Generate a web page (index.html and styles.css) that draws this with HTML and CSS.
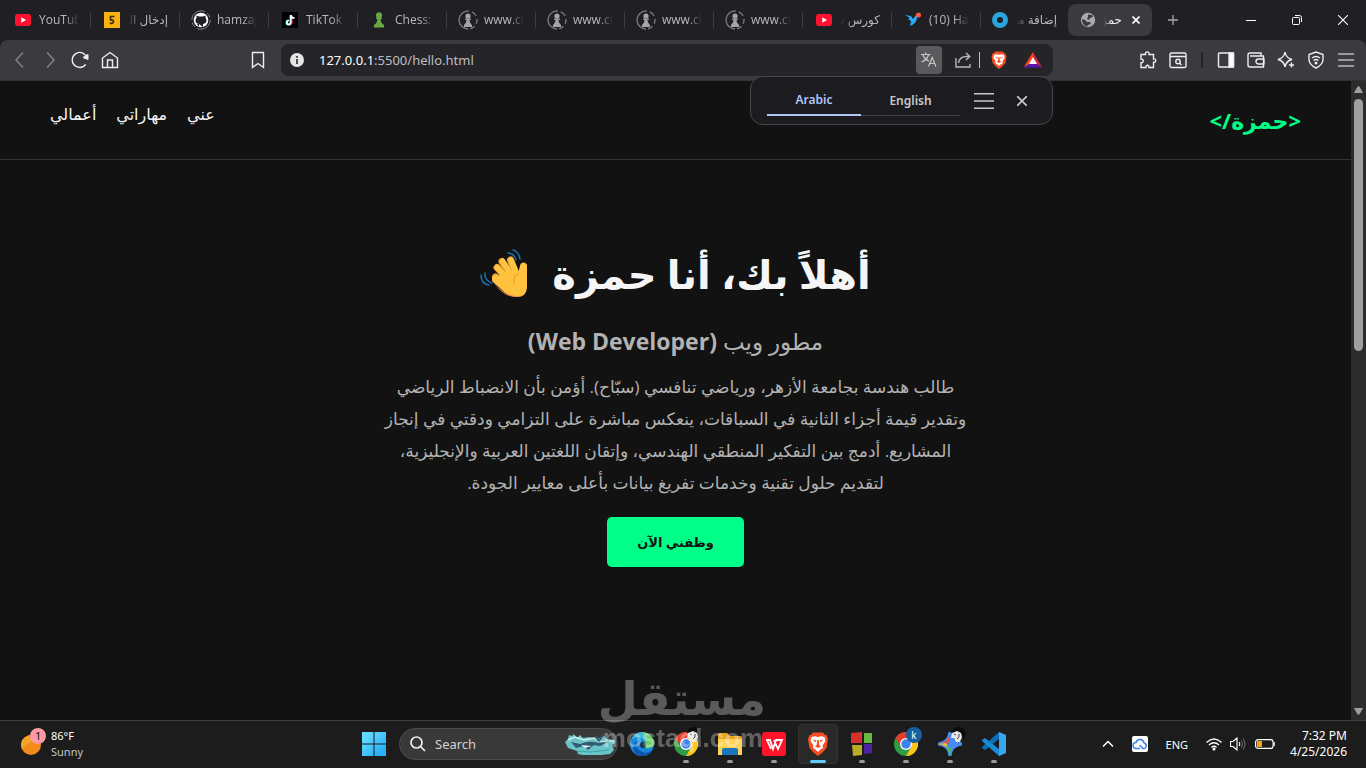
FILE: index.html
```html
<!DOCTYPE html>
<html lang="ar">
<head>
    <meta charset="UTF-8">
    <meta name="viewport" content="width=device-width, initial-scale=1.0">
    <title>حمزة</title>
    <link rel="stylesheet" href="styles.css">
</head>
<body>
    <!-- Shared icons -->
    <svg class="defs" aria-hidden="true">
        <symbol id="youtube" viewBox="0 0 16 16"><rect y="2" width="16" height="12" rx="3" fill="#ff1230"/><path d="M6.3 5.3L11 8l-4.700 2.700z" fill="#fff"/></symbol>
        <symbol id="pawn" viewBox="0 0 20 20"><circle cx="10" cy="10" r="9" fill="none" stroke="#77777a" stroke-width="1.400" stroke-dasharray="29 3 6 3 5 3 5 3" transform="rotate(90 10 10)"/><circle cx="10" cy="6" r="2.600" fill="#a5a5a5"/><path d="M7 8.500h6v1.200h-1.500c0 2 .5 3 2.500 5.300V17H6v-2c2-2.300 2.500-3.300 2.500-5.300H7z" fill="#a5a5a5"/></symbol>
        <symbol id="brave" viewBox="0 0 20 24"><path d="M5 .5h10l2 2.500h1.500L20 7l-1.500 9L14 21l-4 3-4-3-4.500-5L0 7l1.500-4H3z" fill="#fb4b22"/><path d="M3.500 5l3.500-.8 3 .8 3-.8 3.500.8L17.500 9l-3 4.500.7 2.500-2.700 1.500L10 20l-2.500-2.500L4.800 16l.7-2.500L2.500 9z" fill="#fff"/><path d="M4.500 7.500l4 1-1 1.700zM15.500 7.500l-4 1 1 1.700zM9.300 8h1.400l.6 5 1.700 1.300L10 16l-3-1.700L8.700 13z" fill="#fb4b22"/></symbol>
        <symbol id="chrome" viewBox="0 0 24 24"><circle cx="12" cy="12" r="12" fill="#2c9c45"/><path d="M1.600 6A12 12 0 0 1 22.400 6H12L7 15z" fill="#e93a2e"/><path d="M22.400 6A12 12 0 0 1 12 24l5.200-9L14 6z" fill="#fcc419"/><circle cx="12" cy="12" r="6" fill="#fff"/><circle cx="12" cy="12" r="4.700" fill="#3b82ee"/></symbol>
        <symbol id="portrait" viewBox="0 0 16 16"><path d="M1 6Q2 0 8 0t8 6l-2 6-3-4z" fill="#0c0c0c"/><path d="M2 6l5-2 4 2 1 4-2 5-4 0-2-4-3 0z" fill="#e8e8e8"/><path d="M4 7l2 1M9 7v3l-2 2" stroke="#444" fill="none"/></symbol>
    </svg>

    <!-- Tab strip -->
    <div class="tabs">
        <div class="tab"><svg class="fav"><use href="#youtube"/></svg><span class="tab-title">YouTube</span></div>
        <div class="tab"><svg class="fav" viewBox="0 0 16 16"><rect width="16" height="16" fill="#fdb011"/><path d="M10.500 4.500H6.500V8c4-1 4.500 4-.8 3.300" fill="none" stroke="#3a2c10" stroke-width="1.600"/></svg><span class="tab-title rtl">إدخال البيانات</span></div>
        <div class="tab"><svg class="fav big" viewBox="0 0 20 20"><circle cx="10" cy="10" r="9.200" fill="none" stroke="#89898c" stroke-dasharray="18 3 5 3"/><circle cx="10" cy="10" r="7.300" fill="#fff"/><path d="M8 17v-3c-2 .4-2.500-1-3-1.500M8 14c-5-1-3.500-5-2.500-6V5.500l2.500 1h4l2.500-1V8c1 1 2.500 5-2.500 6v3z" fill="#202024"/></svg><span class="tab-title">hamzagamal</span></div>
        <div class="tab"><svg class="fav" viewBox="0 0 16 16"><rect width="16" height="16" fill="#000"/><path d="M8.500 3v7.500a2 2 0 1 1-2-2" stroke="#25f4ee" stroke-width="2" fill="none"/><path d="M9 3v7.500a2 2 0 1 1-2-2M9 3.500q.5 2.500 3.500 2.700" stroke="#fff" stroke-width="1.700" fill="none"/><path d="M10.200 7v4q-.5 1.800-2 2" stroke="#fe2c55" stroke-width=".8" fill="none"/></svg><span class="tab-title">TikTok Studio</span></div>
        <div class="tab"><svg class="fav" viewBox="0 0 16 16"><circle cx="8" cy="3.300" r="3" fill="#6aa844"/><path d="M5 5.500h6V7H9.700c0 3 .8 4 3.300 6v2.500H3V13c2.500-2 3.300-3 3.300-6H5z" fill="#6aa844"/></svg><span class="tab-title">Chess: join</span></div>
        <div class="tab"><svg class="fav big"><use href="#pawn"/></svg><span class="tab-title">www.chess.com</span></div>
        <div class="tab"><svg class="fav big"><use href="#pawn"/></svg><span class="tab-title">www.chess.com</span></div>
        <div class="tab"><svg class="fav big"><use href="#pawn"/></svg><span class="tab-title">www.chess.com</span></div>
        <div class="tab"><svg class="fav big"><use href="#pawn"/></svg><span class="tab-title">www.chess.com</span></div>
        <div class="tab"><svg class="fav"><use href="#youtube"/></svg><span class="tab-title rtl">كورس شامل</span></div>
        <div class="tab"><svg class="fav" viewBox="0 0 16 16"><path d="M0 3l6 1 2 3 3-4h3l-2 3q-1 6-7 8l1-5-3-2 2-1z" fill="#29aaf5"/><circle cx="13.500" cy="3" r="2.500" fill="#ff573d"/></svg><span class="tab-title">(10) Hamza</span></div>
        <div class="tab last"><svg class="fav" viewBox="0 0 16 16"><circle cx="8" cy="8" r="5.500" fill="none" stroke="#2aa5df" stroke-width="5"/></svg><span class="tab-title rtl">إضافة مشروع</span></div>
        <div class="tab active">
            <svg class="fav" viewBox="0 0 16 16"><circle cx="8" cy="8" r="7.200" fill="#a9aaac"/><path d="M8 2.500l4 .5 1 2-3 1-1 2-2-1 1-2zM2 7l3 1 2 2 3 0 1 2-3 1-1 1.500Q2 13 2 7z" fill="#3b3a3e"/></svg>
            <span class="tab-title rtl">حمزة | مطور</span>
            <button class="plain close" aria-label="Close tab"><svg width="8" height="8" viewBox="0 0 8 8"><path d="M.5.5l7 7M7.500.5l-7 7" stroke="#fff" stroke-width="1.700"/></svg></button>
        </div>
        <button class="plain new-tab" aria-label="New tab"><svg width="10" height="10" viewBox="0 0 10 10"><path d="M5 0v10M0 5h10" stroke="#aaa" stroke-width="1.300"/></svg></button>
        <div class="window-buttons">
            <button class="plain" aria-label="Minimize"><svg width="10" height="10" viewBox="0 0 10 10"><path d="M0 5.500h10" stroke="#fff"/></svg></button>
            <button class="plain" aria-label="Restore"><svg width="10" height="10" viewBox="0 0 10 10"><g fill="none" stroke="#fff"><rect x=".5" y="2.500" width="7" height="7" rx="1"/><path d="M3 .5h4.500a2 2 0 0 1 2 2V7"/></g></svg></button>
            <button class="plain" aria-label="Close"><svg width="10" height="10" viewBox="0 0 10 10"><path d="M0 0l10 10M10 0L0 10" stroke="#fff" stroke-width="1.100"/></svg></button>
        </div>
    </div>

    <!-- Toolbar -->
    <div class="toolbar">
        <button class="plain tool dim" aria-label="Back"><svg class="icon" viewBox="0 0 18 18"><path d="M12 1.500L5 9l7 7.500"/></svg></button>
        <button class="plain tool dim" aria-label="Forward"><svg class="icon" viewBox="0 0 18 18"><path d="M6 1.500L13 9l-7 7.500"/></svg></button>
        <button class="plain tool" aria-label="Reload"><svg class="icon" viewBox="0 0 18 18"><path d="M14.700 13.500A7.500 7.500 0 1 1 16 7"/><path d="M12 6.500l5-3v5z" fill="#eee" stroke-width="1"/></svg></button>
        <button class="plain tool" aria-label="Home"><svg class="icon" viewBox="0 0 18 18"><path d="M1.500 16.500V7L9 1.500 16.500 7v9.500zM6.500 16V9h5v7"/></svg></button>
        <button class="plain tool bookmark" aria-label="Bookmark"><svg class="icon" viewBox="0 0 18 18"><path d="M3.500 1.500h11v15L9 12.500l-5.500 4z"/></svg></button>
        <div class="url-bar">
            <svg class="info" viewBox="0 0 14 14"><circle cx="7" cy="7" r="7" fill="#e6e6e7"/><path d="M7 6v5M7 3v1.700" stroke="#29282d" stroke-width="1.600"/></svg>
            <div class="url" dir="ltr">127.0.0.1<span>:5500/hello.html</span></div>
            <button class="plain translate-button" aria-label="Translate"><svg width="16" height="16" viewBox="0 0 16 16" fill="none" stroke="#c8c8c9" stroke-width="1.200"><path d="M0 2.500h9.500M4.700.5v2M2 3q1.500 4.500 6 6M7.500 3Q6 8 .5 10M7.500 14.500l3.700-9 3.700 9M8.700 11.500h5"/></svg></button>
            <button class="plain share" aria-label="Share"><svg width="16" height="16" viewBox="0 0 16 16" fill="none" stroke="#b8b8ba" stroke-width="1.400"><path d="M1 6v9h14v-3M3.500 11q1-6.500 8-6.500h3M11 1l3.800 3.500L11 8"/></svg></button>
            <span class="bar-line"></span>
            <button class="plain shield" aria-label="Brave Shields"><svg width="16" height="18"><use href="#brave"/></svg></button>
            <button class="plain rewards" aria-label="Rewards"><svg width="18" height="16" viewBox="0 0 18 16"><path d="M9 0L0 15l6-3 3-5z" fill="#ff4724"/><path d="M9 0l9 15-6-3-3-5z" fill="#c9263f"/><path d="M0 15.500l6-4h6l6 4z" fill="#5b16ab"/><path d="M9 5l4 7H5z" fill="#fff"/></svg></button>
        </div>
        <div class="extensions">
            <button class="plain tool" aria-label="Extensions"><svg class="icon" viewBox="0 0 18 18"><path d="M2 3.500h4.500c-1-3.500 4.500-3.500 3.500 0h4.500V8c3-.8 3 4 0 3.300v5.200H10c.8-3-3.500-3-3 0H2v-4.800c3 .6 3-4 0-3.500z"/></svg></button>
            <button class="plain tool" aria-label="Search tabs"><svg class="icon" viewBox="0 0 18 18"><rect x="1" y="2" width="16" height="14.500" rx="1.500"/><path d="M1 5.500h16M10.500 12l2 2"/><circle cx="9" cy="10.500" r="2.200"/></svg></button>
            <span class="tool-line"></span>
            <button class="plain tool" aria-label="Sidebar"><svg class="icon" viewBox="0 0 18 18"><rect x="1.500" y="2" width="15" height="14" rx="1"/><path d="M12 2h4.500v14H12z" fill="#fff"/></svg></button>
            <button class="plain tool" aria-label="Wallet"><svg class="icon" viewBox="0 0 18 18"><path d="M14 5V2H3a2 2 0 0 0-2 2v10a2 2 0 0 0 2 2h13.500V5H3M17 8h-5.500a2.500 2.500 0 0 0 0 5H17z"/></svg></button>
            <button class="plain tool" aria-label="Leo"><svg class="icon" viewBox="0 0 18 18"><path d="M8 1q1 6 7 7.500Q9 10 8 16q-1-6-7-7.500Q7 7 8 1zM14.500 11.500v5M12 14h5"/></svg></button>
            <button class="plain tool" aria-label="VPN"><svg class="icon" viewBox="0 0 18 18"><path d="M9 1l7 2.500v5q0 5-7 8.500-7-3.500-7-8.500v-5zM5 7q4-3 8 0M6.500 9.500q2.500-2 5 0"/><circle cx="9" cy="12" r=".8"/></svg></button>
            <button class="plain tool" aria-label="Menu"><svg class="icon" viewBox="0 0 18 18"><path d="M1 3h16M1 9h16M1 15h16" stroke="#bbb"/></svg></button>
        </div>

        <div class="translate-popup">
            <button class="plain lang selected">Arabic</button>
            <button class="plain lang">English</button>
            <button class="plain options" aria-label="Options"><svg width="20" height="16" viewBox="0 0 20 16"><path d="M0 .8h20M0 8h20M0 15.200h20" stroke="#c9c9ca" stroke-width="1.600"/></svg></button>
            <button class="plain dismiss" aria-label="Dismiss"><svg width="10" height="10" viewBox="0 0 10 10"><path d="M0 0l10 10M10 0L0 10" stroke="#ccc" stroke-width="1.600"/></svg></button>
        </div>
    </div>

    <!-- Page -->
    <div class="viewport">
        <div class="page" dir="rtl">
            <header class="site-header">
                <div class="logo">&lt;حمزة/&gt;</div>
                <nav class="site-nav">
                    <a href="#about">عني</a>
                    <a href="#skills">مهاراتي</a>
                    <a href="#work">أعمالي</a>
                </nav>
            </header>
            <main class="hero">
                <h1>أهلاً بك، أنا حمزة
                    <svg class="wave" viewBox="0 0 50 50" role="img" aria-label="wave">
                        <g fill="none" stroke-linecap="round">
                            <path d="M30 38L15.500 28" stroke="#f2a634" stroke-width="7"/>
                            <path d="M31 34L17 18.500" stroke="#f2a634" stroke-width="7"/>
                            <path d="M31 34L17.500 18.500" stroke="#ffc540" stroke-width="5.500"/>
                            <path d="M34 30L22 12.500" stroke="#f2a634" stroke-width="7"/>
                            <path d="M34 30L22.700 12.500" stroke="#ffc540" stroke-width="5.500"/>
                            <path d="M38 29L30.500 11" stroke="#f2a634" stroke-width="7"/>
                            <path d="M38 29L31 11" stroke="#ffc540" stroke-width="5.500"/>
                            <path d="M41 34Q41 25 43.500 17" stroke="#ffc540" stroke-width="7"/>
                        </g>
                        <path d="M12 29q2-4 6-2l8-3 9-4 5 4 7-7v22q-1 9-10 9-8 0-15-7L12 32z" fill="#ffc340"/>
                        <path d="M12 31q7 10 14 13 9 5 17 2-8 4-17-.5Q18 41 12 31z" fill="#f0844c"/>
                        <path d="M39 24q-7 3-5 11" fill="none" stroke="#eba32f" stroke-width="1.200"/>
                        <g fill="none" stroke="#1672b0" stroke-width="1.500" stroke-linecap="round"><path d="M28 4q7 1 8 7M33 1q6 2 7 9M5 24q-1 7 7 10M1 26q0 9 8 10"/></g>
                    </svg>
                </h1>
                <h2>مطور ويب <b>(Web Developer)</b></h2>
                <p>طالب هندسة بجامعة الأزهر، ورياضي تنافسي (سبّاح). أؤمن بأن الانضباط الرياضي<br>
                وتقدير قيمة أجزاء الثانية في السباقات، ينعكس مباشرة على التزامي ودقتي في إنجاز<br>
                المشاريع. أدمج بين التفكير المنطقي الهندسي، وإتقان اللغتين العربية والإنجليزية،<br>
                لتقديم حلول تقنية وخدمات تفريغ بيانات بأعلى معايير الجودة.</p>
                <a class="btn" href="#contact">وظفني الآن</a>
            </main>
        </div>
        <div class="scrollbar">
            <svg width="9" height="8" viewBox="0 0 9 8"><path d="M4.500 0q1 0 4.500 7H0q3.500-7 4.500-7z" fill="#9f9f9f"/></svg>
            <div class="thumb"></div>
            <svg class="down" width="9" height="8" viewBox="0 0 9 8"><path d="M4.500 8Q3.500 8 0 1h9q-3.500 7-4.500 7z" fill="#9f9f9f"/></svg>
        </div>
    </div>

    <!-- Taskbar -->
    <div class="taskbar">
        <div class="weather">
            <svg width="26" height="28" viewBox="0 0 26 28"><circle cx="10" cy="17" r="10" fill="#f28a1c"/><path d="M0 17A10 10 0 0 1 17 10Q5 16 1 21z" fill="#f3a52b"/><circle cx="17" cy="8" r="8" fill="#ff99a4"/><text class="badge" x="14" y="12">1</text></svg>
            <div class="weather-text">86°F<span>Sunny</span></div>
        </div>
        <div class="apps">
            <button class="plain app" aria-label="Start"><svg width="24" height="24" viewBox="0 0 24 24"><defs><linearGradient id="win" x1="0" y1="0" x2="1" y2="1"><stop offset=".2" stop-color="#60d8ff"/><stop offset=".8" stop-color="#2bb0f8"/></linearGradient></defs><path d="M0 0h11.500v11.500H0zM12.500 0H24v11.500H12.500zM0 12.500h11.500V24H0zM12.500 12.500H24V24H12.500z" fill="url(#win)"/></svg></button>
            <label class="search">
                <svg width="16" height="16" viewBox="0 0 16 16" fill="none" stroke="#eee" stroke-width="1.700"><circle cx="6.500" cy="6.500" r="5.500"/><path d="M10.500 10.500l4.500 4.500"/></svg>
                <input type="text" placeholder="Search" aria-label="Search">
                <svg width="50" height="22" viewBox="0 0 50 22"><path d="M0 9l3-3 1-4 3 1 2-2 3 4 3-3 3 3 6-1 8 2 7-3 3 3 8 1v3l-3 2 2 5-4 4-9 1-14 1-9-2-1-3-9-3z" fill="#69c3c7"/><path d="M3 7l7-3 9 3 10-2 8 4 11-1" fill="none" stroke="#d2eee9" stroke-width="1.500"/><path d="M6 9l9 2q10-4 18-1l12-2-10 5-6-1-6 5-4-4-8 2z" fill="#315b72"/><path d="M16 12l11 1-7 2z" fill="#d9eff0"/><path d="M34 8l-4-5M34 8l4-6" fill="none" stroke="#315b72" stroke-width="2"/><path d="M12 18l14 1 18-2" fill="none" stroke="#3aa6a8"/></svg>
            </label>
            <button class="plain app" aria-label="Edge"><svg width="24" height="24" viewBox="0 0 24 24"><circle cx="12" cy="12" r="12" fill="#1688dc"/><path d="M1 8Q5 0 12 0q11 1 12 11-1 6-8 5-3-1-1-4-1-7-8-7-4 1-6 3z" fill="#42b8d7"/><path d="M12 0q11 1 12 11-1 6-8 5-3-1-1-4 3-5-3-12z" fill="#68cf69"/><path d="M9 9q-7 8 6 12 4 0 7-3-4 7-12 6-9-4-6-11 1-4 5-4z" fill="#0b57ad"/><circle cx="13" cy="13" r="3" fill="#1b3447"/></svg></button>
            <button class="plain app open" aria-label="Chrome"><svg width="24" height="24"><use href="#chrome"/></svg><svg class="mini"><use href="#portrait"/></svg></button>
            <button class="plain app open" aria-label="Files"><svg width="24" height="22" viewBox="0 0 24 22"><path d="M0 2q0-2 2-2h7l3 3h10q2 0 2 2v17H0z" fill="#e9a51c"/><path d="M0 6h24v16H0z" fill="#ffd257"/><path d="M4 22v-5q0-2 2-2h12q2 0 2 2v5z" fill="#1976bd"/></svg></button>
            <button class="plain app open" aria-label="WPS"><svg width="24" height="24" viewBox="0 0 24 24"><rect width="24" height="24" rx="3" fill="#ff142b"/><path d="M4 8h4l3 9 3-9h6l-4 9-4-9M5 8l4 9" fill="none" stroke="#fff" stroke-width="1.800"/></svg></button>
            <button class="plain app open current" aria-label="Brave"><svg width="20" height="24"><use href="#brave"/></svg></button>
            <button class="plain app open" aria-label="Blocks"><svg width="22" height="24" viewBox="0 0 22 24"><path d="M0 1l11-1v11H0z" fill="#d8302c"/><path d="M13 1h8v10h-8z" fill="#67b841"/><path d="M1 13h10v10l-9 1z" fill="#b8ad26"/><path d="M13 12h8v9l-8 1z" fill="#4c24a0"/></svg></button>
            <button class="plain app open" aria-label="Chrome profile"><svg width="24" height="24"><use href="#chrome"/></svg><span class="mini letter">k</span></button>
            <button class="plain app open" aria-label="Gemini"><svg width="24" height="24" viewBox="0 0 24 24"><path d="M12 0q1 11 12 12Q13 13 12 24 11 13 0 12 11 11 12 0z" fill="#468cf2" stroke="#468cf2" stroke-width="3" stroke-linejoin="round"/><path d="M0 12q11-1 12-12v9l-4 5z" fill="#ee5047"/><path d="M0 12l8-1 3 5v3Q9 13 0 12z" fill="#f6c52c"/><path d="M8 13l4 11 2-7z" fill="#44b670"/></svg><svg class="mini"><use href="#portrait"/></svg></button>
            <button class="plain app open" aria-label="VS Code"><svg width="24" height="24" viewBox="0 0 24 24"><path d="M17 0v7L3 18l-3-2v-1z" fill="#0b6cb7"/><path d="M17 24v-7L3 6 0 8v1z" fill="#178bd8"/><path d="M17 0l7 3v18l-7 3z" fill="#35a7f1"/></svg></button>
        </div>
        <div class="tray" dir="ltr">
            <svg width="12" height="8" viewBox="0 0 12 8"><path d="M1 6.500l5-5 5 5" fill="none" stroke="#fff" stroke-width="1.500"/></svg>
            <svg class="cloud" width="16" height="16" viewBox="0 0 16 16"><rect width="16" height="16" rx="2" fill="#fff"/><path d="M8 12.500H4a3 3 0 0 1 0-6Q5 3 8.500 3.500 11.500 4 12 7q3 1 2 4-1 2-3 1.500L7.500 9" fill="none" stroke="#3983ef" stroke-width="1.500"/></svg>
            <span class="input-lang">ENG</span>
            <svg width="16" height="14" viewBox="0 0 16 14"><g fill="none" stroke="#fff" stroke-width="1.300"><path d="M.5 5.500q7.500-7 15 0M3 8q5-4.500 10 0M5.500 10.500q2.500-2.500 5 0"/></g><circle cx="8" cy="12" r="1.500" fill="#fff"/></svg>
            <svg class="sound" width="16" height="14" viewBox="0 0 16 14" fill="none" stroke="#fff" stroke-width="1.100"><path d="M.5 4.500H3L7 1v12L3 9.500H.5zM9 5q1.500 2 0 4"/><path d="M11 3.500q3 3.500 0 7M13 1.500q4 5.500 0 11" stroke="#666"/></svg>
            <svg class="battery" width="20" height="10" viewBox="0 0 20 10"><rect x=".6" y=".6" width="17.500" height="8.800" rx="2.500" fill="none" stroke="#fff" stroke-width="1.200"/><rect x="2" y="2" width="5" height="6" fill="#f6a31b"/><path d="M19.300 3v4" stroke="#fff"/></svg>
            <div class="clock">7:32 PM<span>4/25/2026</span></div>
        </div>
    </div>

    <div class="watermark" aria-hidden="true">
        <div class="watermark-name" dir="rtl">مستقل</div>
        <div class="watermark-site">mostaql.com</div>
    </div>
</body>
</html>
```
FILE: styles.css
```css
* {
    box-sizing: border-box;
}
body {
    margin: 0;
    height: 100vh;
    display: flex;
    flex-direction: column;
    overflow: hidden;
    background-color: #202024;
    color: #fff;
    font-family: "Noto Sans", "DejaVu Sans", sans-serif;
    font-size: 12px;
}
svg {
    flex: none;
}
.defs {
    position: absolute;
    width: 0;
    height: 0;
}
.plain {
    display: flex;
    align-items: center;
    justify-content: center;
    flex: none;
    padding: 0;
    border: 0;
    background: none;
    color: inherit;
    font: inherit;
}

/* Tab strip */
.tabs {
    display: flex;
    align-items: center;
    flex: none;
    height: 40px;
    padding-left: 2px;
    font-family: "Open Sans", "DejaVu Sans", sans-serif;
}
.tab {
    display: flex;
    align-items: center;
    flex: none;
    width: 89px;
    height: 16px;
    padding: 0 11px;
    border-right: 1px solid #3c3c40;
    color: #b9b9bb;
}
.tab.last {
    width: 87px;
    padding-left: 9px;
    border: 0;
}
.fav {
    width: 20px;
    height: 20px;
    padding: 2px;
}
.fav.big {
    padding: 0;
}
.tab-title {
    flex: 1;
    margin-left: 6px;
    line-height: 20px;
    overflow: hidden;
    white-space: nowrap;
    -webkit-mask-image: linear-gradient(to right, #000 65%, transparent);
    mask-image: linear-gradient(to right, #000 65%, transparent);
}
.tab-title.rtl {
    direction: rtl;
    -webkit-mask-image: linear-gradient(to left, #000 65%, transparent);
    mask-image: linear-gradient(to left, #000 65%, transparent);
}
.tab.active {
    width: 84px;
    height: 32px;
    padding: 0 12px 0 10px;
    border: 0;
    border-radius: 8px;
    background-color: #3b3a3e;
    color: #eee;
}
.close {
    margin-left: 10px;
}
.new-tab {
    width: 42px;
    height: 32px;
}
.window-buttons {
    display: flex;
    margin-left: auto;
}
.window-buttons button {
    width: 46px;
    height: 40px;
}

/* Toolbar */
.toolbar {
    position: relative;
    display: flex;
    align-items: center;
    flex: none;
    height: 41px;
    padding: 0 5px;
    border-bottom: 1px solid #323236;
    border-radius: 8px 8px 0 0;
    background-color: #3b3a3e;
}
.tool {
    width: 30px;
    height: 30px;
}
.icon {
    width: 18px;
    height: 18px;
    fill: none;
    stroke: #eee;
    stroke-width: 1.4;
}
.dim .icon {
    stroke: #858588;
}
.bookmark {
    margin: 0 8px 0 118px;
}
.url-bar {
    display: flex;
    align-items: center;
    flex: 1;
    height: 32px;
    padding: 0 11px 0 9px;
    border-radius: 8px;
    background-color: #252429;
}
.info {
    width: 14px;
    height: 14px;
    margin-right: 15px;
}
.url {
    flex: 1;
    font-size: 13px;
}
.url span {
    color: #bdbdc0;
}
.translate-button {
    width: 26px;
    height: 28px;
    border-radius: 4px;
    background-color: #5a5a5d;
}
.share {
    margin: 0 8px 0 13px;
}
.bar-line {
    width: 1px;
    height: 16px;
    background-color: #c0c0c0;
}
.shield {
    margin: 0 17px 0 11px;
}
.extensions {
    display: flex;
    align-items: center;
    margin-left: 80px;
}
.tool-line {
    width: 2px;
    height: 16px;
    margin: 0 8px;
    background-color: #232327;
}

/* Translate popup hangs below the address bar */
.translate-popup {
    position: absolute;
    top: 36px;
    right: 313px;
    z-index: 2;
    display: flex;
    align-items: center;
    width: 303px;
    height: 49px;
    padding: 0 25px 0 16px;
    border: 1px solid #48474d;
    border-radius: 13px;
    background-color: #1c1b20;
}
.lang {
    width: 99px;
    height: 30px;
    border-bottom: 1px solid #444348;
    color: #c9c9cc;
    font-weight: 600;
}
.lang.selected {
    width: 94px;
    border-bottom: 2px solid #b4c5fa;
    color: #b4c5fa;
}
.options {
    margin-left: 14px;
}
.dismiss {
    margin-left: auto;
}

/* Page */
.viewport {
    display: flex;
    flex: 1;
    min-height: 0;
}
.page {
    flex: 1;
    background-color: #121212;
    font-family: "Open Sans", "DejaVu Sans", sans-serif;
}
.site-header {
    display: flex;
    justify-content: space-between;
    align-items: flex-start;
    padding: 20px 50px;
    border-bottom: 1px solid #333;
}
.logo {
    color: #00ff88;
    font-size: 22px;
    font-weight: bold;
    line-height: 38px;
}
.site-nav {
    display: flex;
    gap: 20px;
}
.site-nav a {
    color: #f5f5f5;
    font-size: 16px;
    line-height: 26px;
    text-decoration: none;
}
.hero {
    display: flex;
    flex-direction: column;
    align-items: center;
    padding: 76px 20px 0;
    text-align: center;
    white-space: nowrap;
}
.hero h1 {
    display: flex;
    align-items: center;
    gap: 22px;
    margin: 0;
    color: #f5f5f5;
    font-size: 40px;
    line-height: 76px;
}
.wave {
    width: 50px;
    height: 50px;
}
.hero h2 {
    margin: 10px 0 11px;
    color: #b3b3b3;
    font-size: 23px;
    font-weight: normal;
    line-height: 38px;
}
.hero p {
    margin: 0 0 18px;
    color: #b3b3b3;
    font-size: 17px;
    line-height: 32px;
}
.btn {
    padding: 12px 30px;
    border-radius: 5px;
    background-color: #00ff88;
    color: #121212;
    font-size: 13px;
    font-weight: bold;
    line-height: 26px;
    text-decoration: none;
}
.scrollbar {
    display: flex;
    flex-direction: column;
    align-items: center;
    width: 15px;
    padding: 5px 0;
    background-color: #2c2c2c;
}
.thumb {
    width: 9px;
    height: 40%;
    margin-top: 5px;
    border-radius: 5px;
    background-color: #9f9f9f;
}
.down {
    margin-top: auto;
}

/* Taskbar */
.taskbar {
    display: grid;
    grid-template-columns: 1fr auto 1fr;
    align-items: center;
    flex: none;
    height: 48px;
    padding: 0 0 1px 2px;
    border-top: 1px solid #404040;
    background-color: #1c1c1c;
}
.weather {
    display: flex;
    gap: 4px;
    padding-left: 19px;
}
.badge {
    fill: #111;
    font-size: 11px;
}
.weather-text {
    font-size: 11px;
    line-height: 16px;
}
.weather-text span,
.clock span {
    display: block;
}
.weather-text span {
    color: #c5c5c5;
}
.apps {
    display: flex;
    align-items: center;
}
.app {
    position: relative;
    width: 40px;
    height: 40px;
    margin: 0 2px;
    border-radius: 4px;
}
.app.open::after {
    content: "";
    position: absolute;
    bottom: 1px;
    left: 17px;
    width: 6px;
    height: 3px;
    border-radius: 2px;
    background-color: #9a9a9a;
}
.app.current {
    border: 1px solid #343434;
    background-color: #292929;
}
.app.current::after {
    bottom: 0;
    left: 11px;
    width: 16px;
    background-color: #60cdff;
}
.mini {
    position: absolute;
    top: 3px;
    right: 4px;
    width: 16px;
    height: 16px;
}
.letter {
    border-radius: 50%;
    background-color: #15609c;
    font-size: 10px;
    line-height: 16px;
}
.search {
    display: flex;
    align-items: center;
    width: 219px;
    height: 32px;
    margin: 0 2px 0 3px;
    padding: 0 2px 0 10px;
    border: 1px solid #4b4b4b;
    border-radius: 16px;
    background-color: #393939;
}
.search input {
    flex: 1;
    min-width: 0;
    padding: 0 0 0 9px;
    border: 0;
    outline: 0;
    background: none;
    color: #ddd;
    font: inherit;
    font-size: 13px;
}
.search input::placeholder {
    color: #d2d2d2;
}
.tray {
    display: flex;
    align-items: center;
    justify-content: flex-end;
    padding-right: 19px;
    font-size: 11px;
}
.cloud {
    margin: 0 18px;
}
.input-lang {
    margin-right: 18px;
}
.sound {
    margin: 0 9px 0 8px;
}
.clock {
    width: 72px;
    font-size: 12px;
    line-height: 16px;
    text-align: right;
}

/* Watermark lies over the page and the taskbar */
.watermark {
    position: absolute;
    bottom: 16px;
    left: 50%;
    z-index: 3;
    width: 166px;
    margin-left: -83px;
    color: #fff;
    font-weight: bold;
    text-align: center;
    opacity: 0.3;
    pointer-events: none;
}
.watermark-name {
    font-family: "DejaVu Sans", sans-serif;
    font-size: 46px;
    line-height: 50px;
}
.watermark-site {
    font-family: "Liberation Sans", sans-serif;
    font-size: 26px;
    line-height: 28px;
}
```
